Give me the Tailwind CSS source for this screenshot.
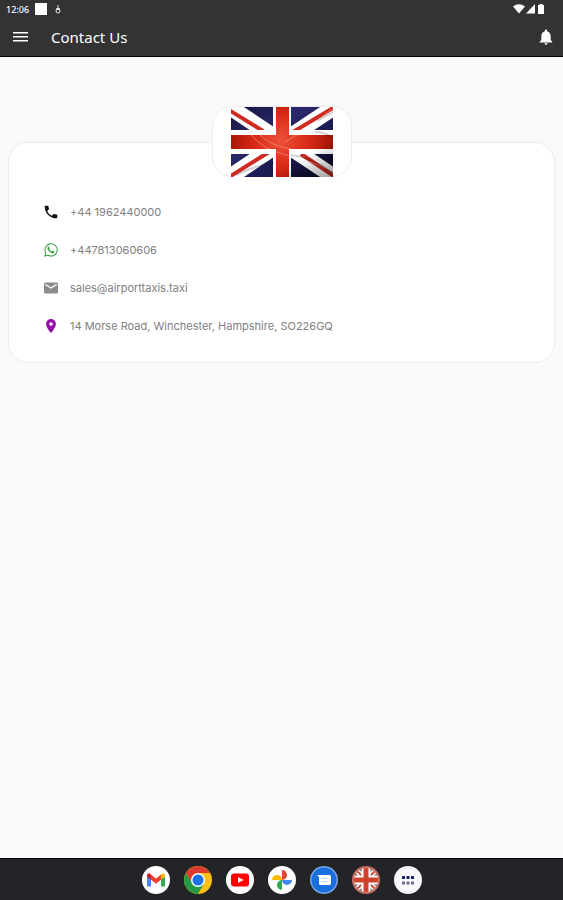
<!DOCTYPE html>
<html lang="en">
<head>
    <meta charset="UTF-8">
    <meta name="viewport" content="width=device-width, initial-scale=1.0">
    <title>Contact Us</title>
    <script src="https://cdn.jsdelivr.net/npm/@tailwindcss/browser@4"></script>
</head>
<body class="min-h-screen flex flex-col bg-[#f9f9f9] font-['Noto_Sans',sans-serif]">
    <!-- Status bar and app bar -->
    <header class="bg-[#333333] text-white border-b border-black">
        <div class="h-[18px] flex items-center justify-between pl-[6px] pr-[17px]">
            <div class="flex items-center">
                <span class="text-[9px] leading-none font-medium w-[29px]">12:06</span>
                <span class="w-3 h-3 bg-white"></span>
                <svg class="w-[6px] h-[9px] ml-2" viewBox="0 0 6 9" fill="none" stroke="#e5e5e5">
                    <path d="M3 0v3M1.500 3.500h3v1h-3z"/>
                    <circle cx="3" cy="6" r="2"/>
                </svg>
            </div>
            <div class="flex items-center gap-px">
                <svg class="w-3 h-[10px]" viewBox="0 0 12 10" fill="#fff"><path d="M0 2.500Q6-1.800 12 2.500L6 9.500z"/></svg>
                <svg class="w-[9px] h-[10px]" viewBox="0 0 9 10" fill="#fff"><path d="M9 0v9.500H0z"/></svg>
                <svg class="w-[10px] h-[10px]" viewBox="0 0 10 10" fill="#fff"><path d="M3.500 0h3v1H8v9H2V1h1.500z"/></svg>
            </div>
        </div>
        <div class="h-[38px] flex items-center px-[10px]">
            <button type="button" aria-label="Open menu" class="w-5 h-5">
                <svg class="w-5 h-5" viewBox="0 0 20 20" stroke="#fff" stroke-width="1.500"><path d="M3 5.750h15M3 9.750h15M3 13.750h15"/></svg>
            </button>
            <h1 class="text-[15px] leading-5 ml-[21px] flex-1">Contact Us</h1>
            <button type="button" aria-label="Notifications" class="w-[14px] h-4">
                <svg class="w-[14px] h-4" viewBox="3 2 18 20" fill="#fff"><path d="M12 22c1.100 0 2-.9 2-2h-4c0 1.100.9 2 2 2zm6-6v-5c0-3.070-1.630-5.640-4.500-6.320V4c0-.83-.67-1.500-1.500-1.500s-1.500.67-1.500 1.500v.68C7.640 5.360 6 7.920 6 11v5l-2 2v1h16v-1l-2-2z"/></svg>
            </button>
        </div>
    </header>

    <main class="flex-1 px-2 pt-[85px]">
        <section class="bg-white border border-[#ececec] rounded-[20px] pb-[17px]">
            <!-- Flag badge over the top edge of the card -->
            <div class="w-[140px] h-[71px] mx-auto -mt-[37px] mb-4 bg-white border border-[#ececec] rounded-[20px] flex justify-center">
                <svg class="w-[102px] h-[70px]" viewBox="0 0 102 70" role="img" aria-label="Union Jack">
                    <defs>
                        <linearGradient id="blue" x1="0" y1="0" x2="1" y2="1">
                            <stop offset="0" stop-color="#14143c"/>
                            <stop offset=".35" stop-color="#28286c"/>
                            <stop offset=".65" stop-color="#1b1b52"/>
                            <stop offset="1" stop-color="#08081a"/>
                        </linearGradient>
                        <radialGradient id="red" gradientUnits="userSpaceOnUse" cx="50" cy="33" r="52">
                            <stop offset="0" stop-color="#ee5138"/>
                            <stop offset=".5" stop-color="#d92b17"/>
                            <stop offset="1" stop-color="#a51408"/>
                        </radialGradient>
                        <linearGradient id="shade" x1="0" y1="0" x2="1" y2="1">
                            <stop offset=".72" stop-color="#000" stop-opacity="0"/>
                            <stop offset="1" stop-color="#000" stop-opacity=".4"/>
                        </linearGradient>
                        <clipPath id="frame"><path d="M0 0h102v70H0z"/></clipPath>
                    </defs>
                    <g clip-path="url(#frame)">
                        <path fill="url(#blue)" d="M0 0h102v70H0z"/>
                        <path stroke="#fff" stroke-width="16" d="M-3-1 105 71M-3 71 105-1"/>
                        <path stroke="#cf2a22" stroke-width="4" d="M-2 3 32 24M70 47l36 24M-2 70 38 45M62 25 102 1"/>
                        <path fill="#fff" d="M42 0h18v70H42zM0 23h102v24H0z"/>
                        <path fill="url(#red)" d="M45 0h13v28h44v14H58v28H45V42H0V28h45z"/>
                        <path fill="none" stroke="#fff" stroke-opacity=".3" d="M18 25q12 17 34 22t48 16M26 25q12 14 34 17M54 35Q80 20 101 2"/>
                        <path fill="none" stroke="#000" stroke-opacity=".18" stroke-width="2" d="M5 68q20-10 38-12M60 48q20 2 42 18M84 25q10 0 18 6M86 14 102 5"/>
                        <path fill="url(#shade)" d="M0 0h102v70H0z"/>
                    </g>
                </svg>
            </div>

            <!-- Contact details -->
            <ul class="px-[35px] font-['Inter',sans-serif] text-[11px] leading-4 text-[#808080]">
                <li class="h-[38px] flex items-center gap-3">
                    <svg class="w-[14px] h-[14px]" viewBox="2 2 20 20" fill="#111"><path d="M6.620 10.790c1.440 2.830 3.760 5.140 6.590 6.590l2.200-2.200c.27-.27.67-.36 1.020-.24 1.120.37 2.330.57 3.570.57.55 0 1 .45 1 1V20c0 .55-.45 1-1 1-9.390 0-17-7.610-17-17 0-.55.45-1 1-1h3.500c.55 0 1 .45 1 1 0 1.250.2 2.450.57 3.570.11.35.03.74-.25 1.020l-2.200 2.200z"/></svg>
                    <a href="tel:+441962440000">+44 1962440000</a>
                </li>
                <li class="h-[38px] flex items-center gap-3">
                    <svg class="w-[14px] h-[14px]" viewBox="0 0 24 24" fill="none" stroke="#43a047" stroke-width="1.800">
                        <path d="M1.500 22.500 3 17A10.500 10.500 0 1 1 7 21z"/>
                        <path fill="#43a047" stroke="none" d="M8.500 6.500c-.4-.8-1.300-.6-1.800 0-3 3.500 3 10 7 11 2 .5 4-.8 4-2.700 0-.5-2.700-1.800-3.200-1.500l-1.200 1.400c-2-.7-3.300-2-4.200-3.700l1-1.400z"/>
                    </svg>
                    <a href="https://wa.me/447813060606">+447813060606</a>
                </li>
                <li class="h-[38px] flex items-center gap-3">
                    <svg class="w-[14px] h-[14px]" viewBox="2 2 20 20" fill="#8c8c8c"><path d="M20 4H4c-1.100 0-2 .9-2 2v12c0 1.100.9 2 2 2h16c1.100 0 2-.9 2-2V6c0-1.100-.9-2-2-2zm0 4-8 5-8-5V6l8 5 8-5v2z"/></svg>
                    <a href="mailto:sales@airporttaxis.taxi">sales@airporttaxis.taxi</a>
                </li>
                <li class="h-[38px] flex items-center gap-3">
                    <svg class="w-[14px] h-[14px]" viewBox="2 2 20 20" fill="#9410a8"><path d="M12 2C8.130 2 5 5.130 5 9c0 5.250 7 13 7 13s7-7.750 7-13c0-3.870-3.130-7-7-7zm0 9.500a2.500 2.500 0 0 1 0-5 2.500 2.500 0 0 1 0 5z"/></svg>
                    <span>14 Morse Road, Winchester, Hampshire, SO226GQ</span>
                </li>
            </ul>
        </section>
    </main>

    <!-- App dock -->
    <nav aria-label="Apps" class="h-[42px] bg-[#232428] border-t border-black flex items-center justify-center gap-[14px]">
        <button type="button" aria-label="Gmail" class="w-7 h-7">
            <svg viewBox="0 0 28 28">
                <circle cx="14" cy="14" r="14" fill="#fff"/>
                <path fill="#4285f4" d="M5 9v10.500q0 1 1 1h3V12z"/>
                <path fill="#34a853" d="M23 9v10.500q0 1-1 1h-3V12z"/>
                <path fill="#ea4335" d="M9 8.500l5 4 5-4v5.200l-5 4-5-4z"/>
                <path fill="#c5221f" d="M5 9.500Q5 7 7.200 7.200L9 8.500v5.200l-4-3z"/>
                <path fill="#fbbc04" d="M23 9.500Q23 7 20.800 7.200L19 8.500v5.200l4-3z"/>
            </svg>
        </button>
        <button type="button" aria-label="Chrome" class="w-7 h-7">
            <svg viewBox="0 0 28 28">
                <circle cx="14" cy="14" r="14" fill="#fbc116"/>
                <path fill="#dd3b2f" d="M1.900 7A14 14 0 0 1 26.100 7H14v7H6z"/>
                <path fill="#249a46" d="M1.900 7A14 14 0 0 0 14 28l6.100-10.500L14 14H6z"/>
                <circle cx="14" cy="14" r="7" fill="#fff"/>
                <circle cx="14" cy="14" r="5.500" fill="#1a73e8"/>
            </svg>
        </button>
        <button type="button" aria-label="YouTube" class="w-7 h-7">
            <svg viewBox="0 0 28 28">
                <circle cx="14" cy="14" r="14" fill="#fff"/>
                <rect x="5" y="7.500" width="18" height="13" rx="3" fill="#f00"/>
                <path fill="#fff" d="m12 11 5.500 3-5.500 3z"/>
            </svg>
        </button>
        <button type="button" aria-label="Photos" class="w-7 h-7">
            <svg viewBox="0 0 28 28">
                <circle cx="14" cy="14" r="14" fill="#fff"/>
                <path fill="#ea4335" d="M14 4a5 5 0 0 1 0 10z"/>
                <path fill="#4285f4" d="M24 14a5 5 0 0 1-10 0z"/>
                <path fill="#34a853" d="M14 24a5 5 0 0 1 0-10z"/>
                <path fill="#fbbc04" d="M4 14a5 5 0 0 1 10 0z"/>
            </svg>
        </button>
        <button type="button" aria-label="Messages" class="w-7 h-7">
            <svg viewBox="0 0 28 28">
                <circle cx="14" cy="14" r="14" fill="#77a4dc"/>
                <circle cx="14" cy="14" r="12.500" fill="#1a6fdf"/>
                <path fill="#fff" d="M7 9h12.500Q21 9 21 10.500v7q0 1.500-1.500 1.500h-9Q9 19 9 17.500V11z"/>
                <path stroke="#c3daf8" d="M11.500 12.500H18M11.500 15.500H18"/>
            </svg>
        </button>
        <button type="button" aria-label="Airport Taxis" class="w-7 h-7">
            <svg viewBox="0 0 28 28">
                <clipPath id="disc"><circle cx="14" cy="14" r="12"/></clipPath>
                <circle cx="14" cy="14" r="14" fill="#c9705f"/>
                <g clip-path="url(#disc)">
                    <path fill="#6d6b80" d="M0 0h28v28H0z"/>
                    <path stroke="#fff" stroke-width="5" d="m2 2 24 24M2 26 26 2"/>
                    <path stroke="#d04c38" stroke-width="2" d="m2 2 24 24M2 26 26 2"/>
                    <path fill="#fff" d="M9.500 0h9v28h-9zM0 9.500h28v9H0z"/>
                    <path fill="#cf432d" d="M11.500 0h5v11.500H28v5H16.500V28h-5V16.500H0v-5h11.500z"/>
                </g>
            </svg>
        </button>
        <button type="button" aria-label="All apps" class="w-7 h-7">
            <svg viewBox="0 0 28 28">
                <circle cx="14" cy="14" r="14" fill="#f8f8fc"/>
                <path fill="#1f2468" d="M8 10h3v3H8zM12.500 10h3v3h-3zM17 10h3v3h-3z"/>
                <path fill="#696c91" d="M8 15.500h3v3H8zM12.500 15.500h3v3h-3zM17 15.500h3v3h-3z"/>
            </svg>
        </button>
    </nav>
</body>
</html>
